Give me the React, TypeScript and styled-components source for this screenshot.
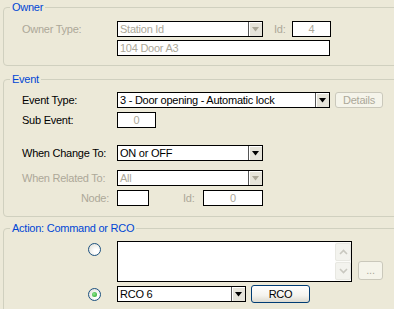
import React from "react";
import styled, { createGlobalStyle } from "styled-components";

const Global = createGlobalStyle`
  html, body { margin: 0; padding: 0; background: #ECE9D8; }
  body {
    font-family: "Liberation Sans", Arial, sans-serif;
    font-size: 11px;
    letter-spacing: -0.25px;
    color: #000;
  }
`;

const Page = styled.div`
  width: 394px;
  height: 309px;
  overflow: hidden;
  box-sizing: border-box;
  padding: 1px 0 0 3px;
  display: flex;
  flex-direction: column;
  background: #ece9d8;
`;

const Group = styled.fieldset<{ $mt: number }>`
  margin: ${(p) => p.$mt}px 0 0 0;
  padding: 0;
  width: 400px;
  min-width: 0;
  box-sizing: border-box;
  border: 1px solid #d0d0bf;
  border-radius: 4px;
  flex-shrink: 0;
`;

const Legend = styled.legend`
  color: #0046d5;
  margin-left: 6px;
  padding: 0 2px;
  line-height: 13px;
  font-size: 11px;
`;

const Body = styled.div<{ $pt: number; $pb: number }>`
  display: flex;
  flex-direction: column;
  padding: ${(p) => p.$pt}px 0 ${(p) => p.$pb}px 18px;
`;

const Row = styled.div<{ $mt?: number; $align?: string }>`
  display: flex;
  align-items: ${(p) => p.$align || "center"};
  margin-top: ${(p) => p.$mt || 0}px;
`;

const Label = styled.span<{ $disabled?: boolean; $right?: boolean }>`
  width: ${(p) => (p.$right ? "87px" : "95px")};
  margin-right: ${(p) => (p.$right ? "8px" : "0")};
  text-align: ${(p) => (p.$right ? "right" : "left")};
  color: ${(p) => (p.$disabled ? "#aca899" : "#000")};
  white-space: nowrap;
  line-height: 13px;
`;

const InlineLabel = styled.span<{ $w: number; $ml: number }>`
  width: ${(p) => p.$w}px;
  margin-left: ${(p) => p.$ml}px;
  color: #aca899;
  line-height: 13px;
`;

const Field = styled.div<{ $w: number; $h?: number; $disabled?: boolean; $center?: boolean }>`
  width: ${(p) => p.$w}px;
  height: ${(p) => p.$h || 16}px;
  box-sizing: border-box;
  border: 1px solid #000;
  background: #fff;
  color: ${(p) => (p.$disabled ? "#aca899" : "#000")};
  display: flex;
  align-items: center;
  justify-content: ${(p) => (p.$center ? "center" : "flex-start")};
  padding-left: ${(p) => (p.$center ? 0 : 2)}px;
  line-height: 13px;
  white-space: nowrap;
  overflow: hidden;
`;

const ComboBox = styled.div<{ $w: number }>`
  width: ${(p) => p.$w}px;
  height: 16px;
  box-sizing: border-box;
  border: 1px solid #000;
  background: #fff;
  display: flex;
`;

const ComboText = styled.span<{ $disabled?: boolean }>`
  flex: 1;
  padding-left: 2px;
  line-height: 14px;
  color: ${(p) => (p.$disabled ? "#aca899" : "#000")};
  white-space: nowrap;
  overflow: hidden;
`;

const ComboButton = styled.span`
  width: 14px;
  height: 14px;
  box-sizing: border-box;
  border-left: 1px solid #555;
  background: #e6e4da;
  box-shadow: inset 1px 1px #fff;
  display: flex;
  align-items: center;
  justify-content: center;
`;

const Arrow = ({ color }: { color: string }) => (
  <svg width="7" height="5" viewBox="0 0 7 5">
    <polygon points="0,0 7,0 3.5,4.5" fill={color} />
  </svg>
);

const Combo = ({ w, text, disabled, arrowDisabled }: { w: number; text: string; disabled?: boolean; arrowDisabled?: boolean }) => (
  <ComboBox $w={w}>
    <ComboText $disabled={disabled}>{text}</ComboText>
    <ComboButton>
      <Arrow color={arrowDisabled ? "#aca899" : "#000"} />
    </ComboButton>
  </ComboBox>
);

const XpButton = styled.button<{ $w: number; $h: number; $disabled?: boolean; $ml: number; $bottom?: boolean }>`
  width: ${(p) => p.$w}px;
  height: ${(p) => p.$h}px;
  margin-left: ${(p) => p.$ml}px;
  align-self: ${(p) => (p.$bottom ? "flex-end" : "auto")};
  margin-bottom: ${(p) => (p.$bottom ? 2 : 0)}px;
  box-sizing: border-box;
  padding: 0;
  font-family: inherit;
  font-size: 11px;
  letter-spacing: inherit;
  border-radius: 3px;
  border: 1px solid ${(p) => (p.$disabled ? "#cac8bb" : "#003c74")};
  background: ${(p) =>
    p.$disabled ? "#f5f4ea" : "linear-gradient(#ffffff, #f4f3ee 60%, #dcdad0)"};
  color: ${(p) => (p.$disabled ? "#aca899" : "#000")};
  line-height: 13px;
`;

const RadioCell = styled.div<{ $mt: number }>`
  width: 95px;
  display: flex;
  justify-content: flex-end;
  padding-right: 16px;
  box-sizing: border-box;
  margin-top: ${(p) => p.$mt}px;
`;

const RadioCircle = styled.span`
  width: 13px;
  height: 13px;
  box-sizing: border-box;
  border-radius: 50%;
  border: 1px solid #1c5180;
  background: radial-gradient(circle at 65% 65%, #ffffff 20%, #dcdbd3 100%);
  display: flex;
  align-items: center;
  justify-content: center;
`;

const RadioDot = styled.span`
  width: 5px;
  height: 5px;
  border-radius: 50%;
  background: radial-gradient(circle at 40% 40%, #8ee68e, #21a121);
`;

const TextArea = styled.div`
  width: 235px;
  height: 41px;
  box-sizing: border-box;
  border: 1px solid #000;
  background: #fff;
  display: flex;
  justify-content: flex-end;
`;

const ScrollBar = styled.div`
  width: 16px;
  display: flex;
  flex-direction: column;
  gap: 1px;
  padding: 1px 0;
  box-sizing: border-box;
  background: #fcfcf9;
`;

const ScrollButton = styled.div`
  flex: 1;
  border: 1px solid #e8e8e2;
  border-radius: 2px;
  background: #f3f3ee;
  display: flex;
  align-items: center;
  justify-content: center;
`;

const Chevron = ({ up }: { up?: boolean }) => (
  <svg width="9" height="6" viewBox="0 0 9 6">
    <polyline
      points={up ? "1,5 4.5,1.5 8,5" : "1,1 4.5,4.5 8,1"}
      fill="none"
      stroke="#c9c8c0"
      strokeWidth="1.6"
    />
  </svg>
);

export default function App() {
  return (
    <>
      <Global />
      <Page>
        <Group $mt={0}>
          <Legend>Owner</Legend>
          <Body $pt={7} $pb={9}>
            <Row>
              <Label $disabled>Owner Type:</Label>
              <Combo w={146} text="Station Id" disabled arrowDisabled />
              <InlineLabel $w={18} $ml={11}>Id:</InlineLabel>
              <Field $w={39} $disabled $center>4</Field>
            </Row>
            <Row $mt={3}>
              <Label />
              <Field $w={213} $disabled>104 Door A3</Field>
            </Row>
          </Body>
        </Group>

        <Group $mt={7}>
          <Legend>Event</Legend>
          <Body $pt={6} $pb={10}>
            <Row>
              <Label>Event Type:</Label>
              <Combo w={213} text="3 - Door opening - Automatic lock" />
              <XpButton $w={48} $h={16} $ml={5} $disabled disabled>Details</XpButton>
            </Row>
            <Row $mt={4}>
              <Label>Sub Event:</Label>
              <Field $w={39} $disabled $center>0</Field>
            </Row>
            <Row $mt={17}>
              <Label>When Change To:</Label>
              <Combo w={146} text="ON or OFF" />
            </Row>
            <Row $mt={9}>
              <Label $disabled>When Related To:</Label>
              <Combo w={146} text="All" disabled arrowDisabled />
            </Row>
            <Row $mt={4}>
              <Label $disabled $right>Node:</Label>
              <Field $w={32} />
              <InlineLabel $w={20} $ml={34}>Id:</InlineLabel>
              <Field $w={60} $disabled $center>0</Field>
            </Row>
          </Body>
        </Group>

        <Group $mt={5}>
          <Legend>Action: Command or RCO</Legend>
          <Body $pt={6} $pb={10}>
            <Row $align="flex-start">
              <RadioCell $mt={2}>
                <RadioCircle />
              </RadioCell>
              <TextArea>
                <ScrollBar>
                  <ScrollButton><Chevron up /></ScrollButton>
                  <ScrollButton><Chevron /></ScrollButton>
                </ScrollBar>
              </TextArea>
              <XpButton $w={25} $h={19} $ml={6} $disabled $bottom disabled>...</XpButton>
            </Row>
            <Row $mt={3}>
              <RadioCell $mt={0}>
                <RadioCircle>
                  <RadioDot />
                </RadioCircle>
              </RadioCell>
              <Combo w={129} text="RCO 6" />
              <XpButton $w={59} $h={18} $ml={5}>RCO</XpButton>
            </Row>
          </Body>
        </Group>
      </Page>
    </>
  );
}
